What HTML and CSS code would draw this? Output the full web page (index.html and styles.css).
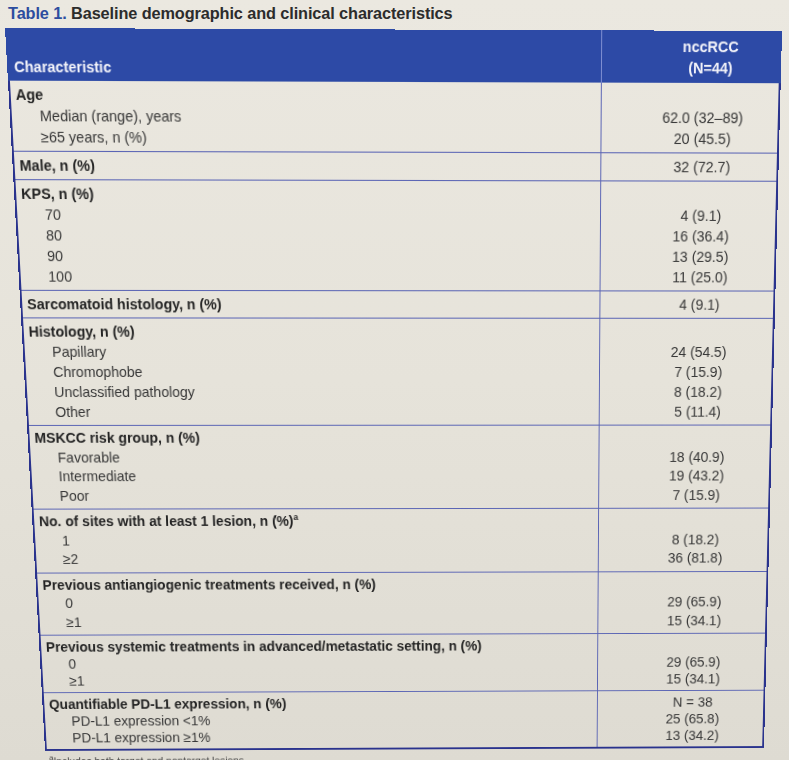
FILE: index.html
```html
<!DOCTYPE html>
<html lang="en">
<head>
<meta charset="utf-8">
<title>Table 1. Baseline demographic and clinical characteristics</title>
<link rel="stylesheet" href="styles.css">
</head>
<body>
<h1 class="title"><span class="tno">Table 1.</span> Baseline demographic and clinical characteristics</h1>
<div class="sheet">
  <div class="table">
    <div class="row head">
      <div class="label">Characteristic</div>
      <div class="vals"><div>nccRCC</div><div>(N=44)</div></div>
    </div>
    <div class="row">
      <div class="label"><div class="h">Age</div><div class="sub">Median (range), years</div><div class="sub">≥65 years, n (%)</div></div>
      <div class="vals offset"><div>62.0 (32–89)</div><div>20 (45.5)</div></div>
    </div>
    <div class="row">
      <div class="label"><div class="h">Male, n (%)</div></div>
      <div class="vals"><div>32 (72.7)</div></div>
    </div>
    <div class="row">
      <div class="label"><div class="h">KPS, n (%)</div><div class="sub">70</div><div class="sub">80</div><div class="sub">90</div><div class="sub">100</div></div>
      <div class="vals offset"><div>4 (9.1)</div><div>16 (36.4)</div><div>13 (29.5)</div><div>11 (25.0)</div></div>
    </div>
    <div class="row">
      <div class="label"><div class="h">Sarcomatoid histology, n (%)</div></div>
      <div class="vals"><div>4 (9.1)</div></div>
    </div>
    <div class="row">
      <div class="label"><div class="h">Histology, n (%)</div><div class="sub">Papillary</div><div class="sub">Chromophobe</div><div class="sub">Unclassified pathology</div><div class="sub">Other</div></div>
      <div class="vals offset"><div>24 (54.5)</div><div>7 (15.9)</div><div>8 (18.2)</div><div>5 (11.4)</div></div>
    </div>
    <div class="row mid">
      <div class="label"><div class="h">MSKCC risk group, n (%)</div><div class="sub">Favorable</div><div class="sub">Intermediate</div><div class="sub">Poor</div></div>
      <div class="vals offset"><div>18 (40.9)</div><div>19 (43.2)</div><div>7 (15.9)</div></div>
    </div>
    <div class="row mid">
      <div class="label"><div class="h">No. of sites with at least 1 lesion, n (%)<sup>a</sup></div><div class="sub">1</div><div class="sub">≥2</div></div>
      <div class="vals offset"><div>8 (18.2)</div><div>36 (81.8)</div></div>
    </div>
    <div class="row mid">
      <div class="label"><div class="h">Previous antiangiogenic treatments received, n (%)</div><div class="sub">0</div><div class="sub">≥1</div></div>
      <div class="vals offset"><div>29 (65.9)</div><div>15 (34.1)</div></div>
    </div>
    <div class="row tight">
      <div class="label"><div class="h">Previous systemic treatments in advanced/metastatic setting, n (%)</div><div class="sub">0</div><div class="sub">≥1</div></div>
      <div class="vals offset"><div>29 (65.9)</div><div>15 (34.1)</div></div>
    </div>
    <div class="row tight">
      <div class="label"><div class="h">Quantifiable PD-L1 expression, n (%)</div><div class="sub">PD-L1 expression &lt;1%</div><div class="sub">PD-L1 expression ≥1%</div></div>
      <div class="vals"><div>N = 38</div><div>25 (65.8)</div><div>13 (34.2)</div></div>
    </div>
  </div>
  <p class="foot"><sup>a</sup>Includes both target and nontarget lesions.</p>
</div>
</body>
</html>
```

FILE: styles.css
```css
html, body {
  margin: 0;
  padding: 0;
}
body {
  width: 789px;
  height: 760px;
  overflow: hidden;
  background: linear-gradient(180deg, #ebe8e0 0%, #e6e3da 50%, #dedbd2 100%);
  font-family: "Liberation Sans", Arial, sans-serif;
  color: #383838;
}
.title {
  margin: 0;
  height: 28px;
  line-height: 27px;
  padding-left: 8px;
  font-size: 16.3px;
  font-weight: bold;
  color: #2c2c2c;
  white-space: nowrap;
  letter-spacing: -0.1px;
}
.title .tno {
  color: #2d4d9f;
}
.sheet {
  width: 777px;
  transform-origin: 0 0;
  transform: matrix3d(1.008775, 0.0038947, 0, 0.000011221, 0.060443, 1.080886, 0, 0.00011203, 0, 0, 1, 0, 5, 0, 0, 1);
}
.table {
  box-sizing: border-box;
  width: 777px;
  border-left: 2px solid #2a338d;
  border-right: 2px solid #2a338d;
  border-bottom: 2px solid #2a338d;
  font-size: 14.5px;
}
.row {
  --lh: 20px;
  display: grid;
  grid-template-columns: 594px 1fr;
  line-height: var(--lh);
  border-bottom: 1px solid #5a64b4;
}
.row:last-child {
  border-bottom: 0;
}
.row.mid {
  --lh: 19.5px;
}
.row.tight {
  --lh: 18px;
}
.label {
  box-sizing: border-box;
  padding: 3px 0 3px 5px;
  border-right: 1px solid #5a64b4;
  white-space: nowrap;
}
.vals {
  padding: 3px 0 3px 26px;
  text-align: center;
  white-space: nowrap;
}
.vals.offset {
  padding-top: calc(3px + var(--lh));
}
.h {
  font-weight: bold;
  color: #242424;
}
.h sup {
  font-size: 9px;
  line-height: 0;
}
.sub {
  padding-left: 23px;
}
.row.head {
  grid-template-columns: 596px 1fr;
  margin: 0 -2px;
  background: #2d4aa6;
  color: #f4f4fa;
  font-weight: bold;
  border-bottom: 0;
}
.head .label {
  display: flex;
  align-items: flex-end;
  padding: 6px 0 3px 7px;
  border-right: 1px solid #7f8fd2;
}
.head .vals {
  padding: 5px 0 4px 38px;
}
.foot {
  margin: 3px 0 0 4px;
  font-size: 11px;
  color: #444;
}
.foot sup {
  font-size: 8px;
}
```
